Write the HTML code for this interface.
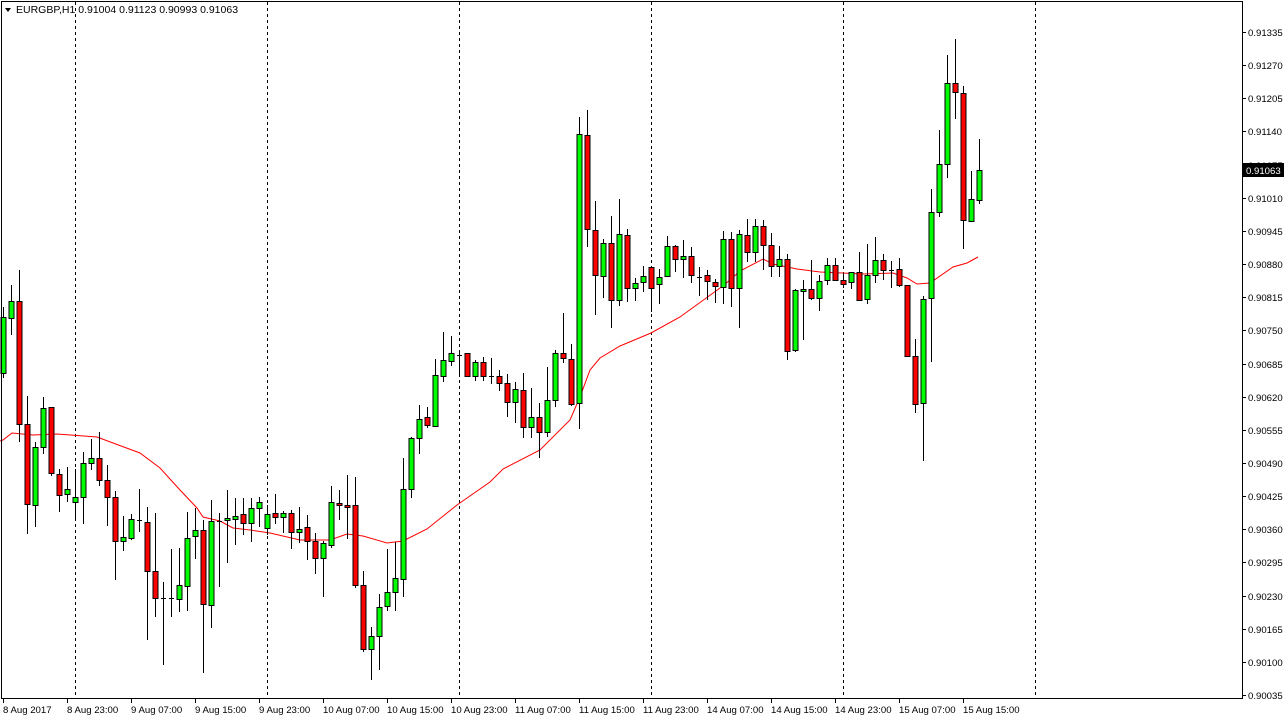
<!DOCTYPE html>
<html><head><meta charset="utf-8"><style>
html,body{margin:0;padding:0;background:#fff;width:1284px;height:720px;overflow:hidden}
svg{position:absolute;left:0;top:0}
.t{font-family:"Liberation Sans",sans-serif;font-size:9.6px;fill:#000}
</style></head><body>
<svg id="s" width="1284" height="720" xmlns="http://www.w3.org/2000/svg">
<rect x="0" y="0" width="1284" height="720" fill="#fff"/>
<g id="grid" stroke="#000" stroke-width="1" stroke-dasharray="3,3">
<line x1="75.5" y1="2" x2="75.5" y2="698"/><line x1="267.5" y1="2" x2="267.5" y2="698"/><line x1="459.5" y1="2" x2="459.5" y2="698"/><line x1="651.5" y1="2" x2="651.5" y2="698"/><line x1="843.5" y1="2" x2="843.5" y2="698"/><line x1="1035.5" y1="2" x2="1035.5" y2="698"/>
</g>
<polyline fill="none" stroke="#ff0000" stroke-width="1" points="0,441 3,440 12,433 33,435 57,434 97,437 113,443 140,453 160,468 180,490 197,508 203,517 220,521 233,528 250,530 270,533 300,540 330,540 347,534 363,536 387,543 403,541 427,529 457,505 490,482 503,469 540,450 570,420 580,397 590,370 600,358 620,346 651,333 680,317 720,288 730,280 740,271 763,259 773,264 797,269 820,272 863,274 893,273 907,278 917,284 930,283 953,267 967,263 978,257"/>
<g id="c"></g>
<rect x="1.5" y="1.5" width="1241" height="697" fill="none" stroke="#000"/>
<g id="ax"></g>
<polygon points="5,8 11,8 8,12" fill="#000"/>
<text x="16" y="13" style="font-family:'Liberation Sans',sans-serif;font-size:10.5px">EURGBP,H1  0.91004 0.91123 0.90993 0.91063</text>
</svg>
<script>
var D="317,373,307,378,g|301,318,285,335,g|301,424,270,442,r|424,504,396,534,r|447,505,442,527,g|408,447,397,454,g|407,473,407,476,r|474,495,469,512,r|489,494,467,502,g|497,502,469,519,g|463,497,452,524,g|458,463,439,470,g|458,480,432,486,r|480,497,465,526,r|497,541,491,580,r|537,541,516,551,g|519,538,514,540,g|520,520,489,532,d|522,571,507,640,r|571,598,513,617,r|598,598,582,665,d|598,598,549,617,d|585,599,548,612,g|538,586,512,611,g|530,536,508,559,g|530,604,520,673,r|521,605,500,628,g|521,521,513,587,d|518,520,490,563,g|516,519,498,545,g|514,523,498,535,r|508,523,498,542,g|502,508,497,527,g|514,528,505,535,g|513,517,494,524,r|513,517,511,533,g|513,532,510,549,r|529,532,507,543,g|527,541,515,560,r|541,558,533,574,r|543,558,541,597,g|502,545,486,548,g|503,505,490,520,r|505,507,475,539,r|505,585,477,588,r|585,649,571,652,r|636,649,627,680,g|607,636,594,670,g|592,606,549,611,g|578,592,542,611,g|489,579,458,597,g|438,489,437,498,g|419,438,405,454,g|417,425,407,428,r|375,426,359,427,g|360,376,332,382,g|353,361,336,366,g|355,355,353,377,d|353,376,353,376,r|362,376,360,381,g|362,376,357,381,r|376,376,358,384,d|376,383,370,391,r|383,402,374,417,r|389,402,382,423,g|390,427,373,438,r|417,427,388,438,g|417,432,403,458,r|400,432,367,437,g|353,400,350,407,g|353,358,313,363,r|359,404,344,406,r|134,403,117,429,g|135,229,110,247,r|230,275,201,315,r|243,276,239,298,g|243,300,216,328,r|234,300,199,306,g|235,288,229,302,r|283,288,278,301,g|276,282,266,292,g|267,288,267,312,r|277,284,269,304,g|246,276,236,277,g|246,259,245,272,r|256,259,240,278,g|256,275,247,283,r|277,277,267,296,d|275,281,270,300,r|282,286,279,303,r|239,287,231,304,g|239,288,232,307,r|234,288,230,328,g|235,252,219,262,r|226,252,219,262,g|226,245,220,270,r|245,266,233,277,r|259,266,246,277,g|259,351,254,360,r|290,350,289,352,g|289,291,280,340,g|289,298,260,300,r|281,298,275,311,g|265,280,258,285,g|265,280,258,280,r|280,284,273,288,r|272,282,272,289,g|272,300,252,301,r|275,299,244,304,g|260,275,237,283,g|260,270,254,280,r|270,270,261,288,d|269,285,258,287,r|285,356,285,357,r|356,404,339,413,r|299,403,296,461,g|212,298,189,362,g|164,212,130,217,g|83,164,55,178,g|83,92,39,119,r|93,220,86,249,r|199,221,171,222,g|170,200,139,204,g";
var g=document.getElementById("c"),h="";
D.split("|").forEach(function(e,i){var a=e.split(","),x=3+8*i,t=+a[0],b=+a[1],hi=+a[2],lo=+a[3],c=a[4];
h+='<line x1="'+(x+.5)+'" y1="'+hi+'" x2="'+(x+.5)+'" y2="'+lo+'" stroke="#000"/>';
if(c=="d"){h+='<line x1="'+(x-2)+'" y1="'+(t+.5)+'" x2="'+(x+3)+'" y2="'+(t+.5)+'" stroke="#000"/>';}
else{h+='<rect x="'+(x-2)+'" y="'+(t+.5)+'" width="5" height="'+Math.max(b-t,2)+'" fill="'+(c=="g"?"#00ff00":"#ff0000")+'" stroke="#000"/>';}});
g.innerHTML=h;
var ax="",p=["0.91335","0.91270","0.91205","0.91140","0.91075","0.91010","0.90945","0.90880","0.90815","0.90750","0.90685","0.90620","0.90555","0.90490","0.90425","0.90360","0.90295","0.90230","0.90165","0.90100","0.90035"];
p.forEach(function(v,k){var y=Math.round(32+k*33.15);ax+='<line x1="1242" y1="'+(y+.5)+'" x2="1246" y2="'+(y+.5)+'" stroke="#000"/><text class="t" x="1248" y="'+(y+4)+'">'+v+'</text>';});
ax+='<rect x="1243" y="163" width="41" height="14" fill="#000"/><text class="t" x="1246" y="174" style="fill:#fff">0.91063</text>';
var d=["8 Aug 2017","8 Aug 23:00","9 Aug 07:00","9 Aug 15:00","9 Aug 23:00","10 Aug 07:00","10 Aug 15:00","10 Aug 23:00","11 Aug 07:00","11 Aug 15:00","11 Aug 23:00","14 Aug 07:00","14 Aug 15:00","14 Aug 23:00","15 Aug 07:00","15 Aug 15:00"];
d.forEach(function(v,k){var x=3+64*k;ax+='<line x1="'+(x+.5)+'" y1="699" x2="'+(x+.5)+'" y2="703" stroke="#000"/><text class="t" x="'+x+'" y="713">'+v+'</text>';});
document.getElementById("ax").innerHTML=ax;
</script>
</body></html>
